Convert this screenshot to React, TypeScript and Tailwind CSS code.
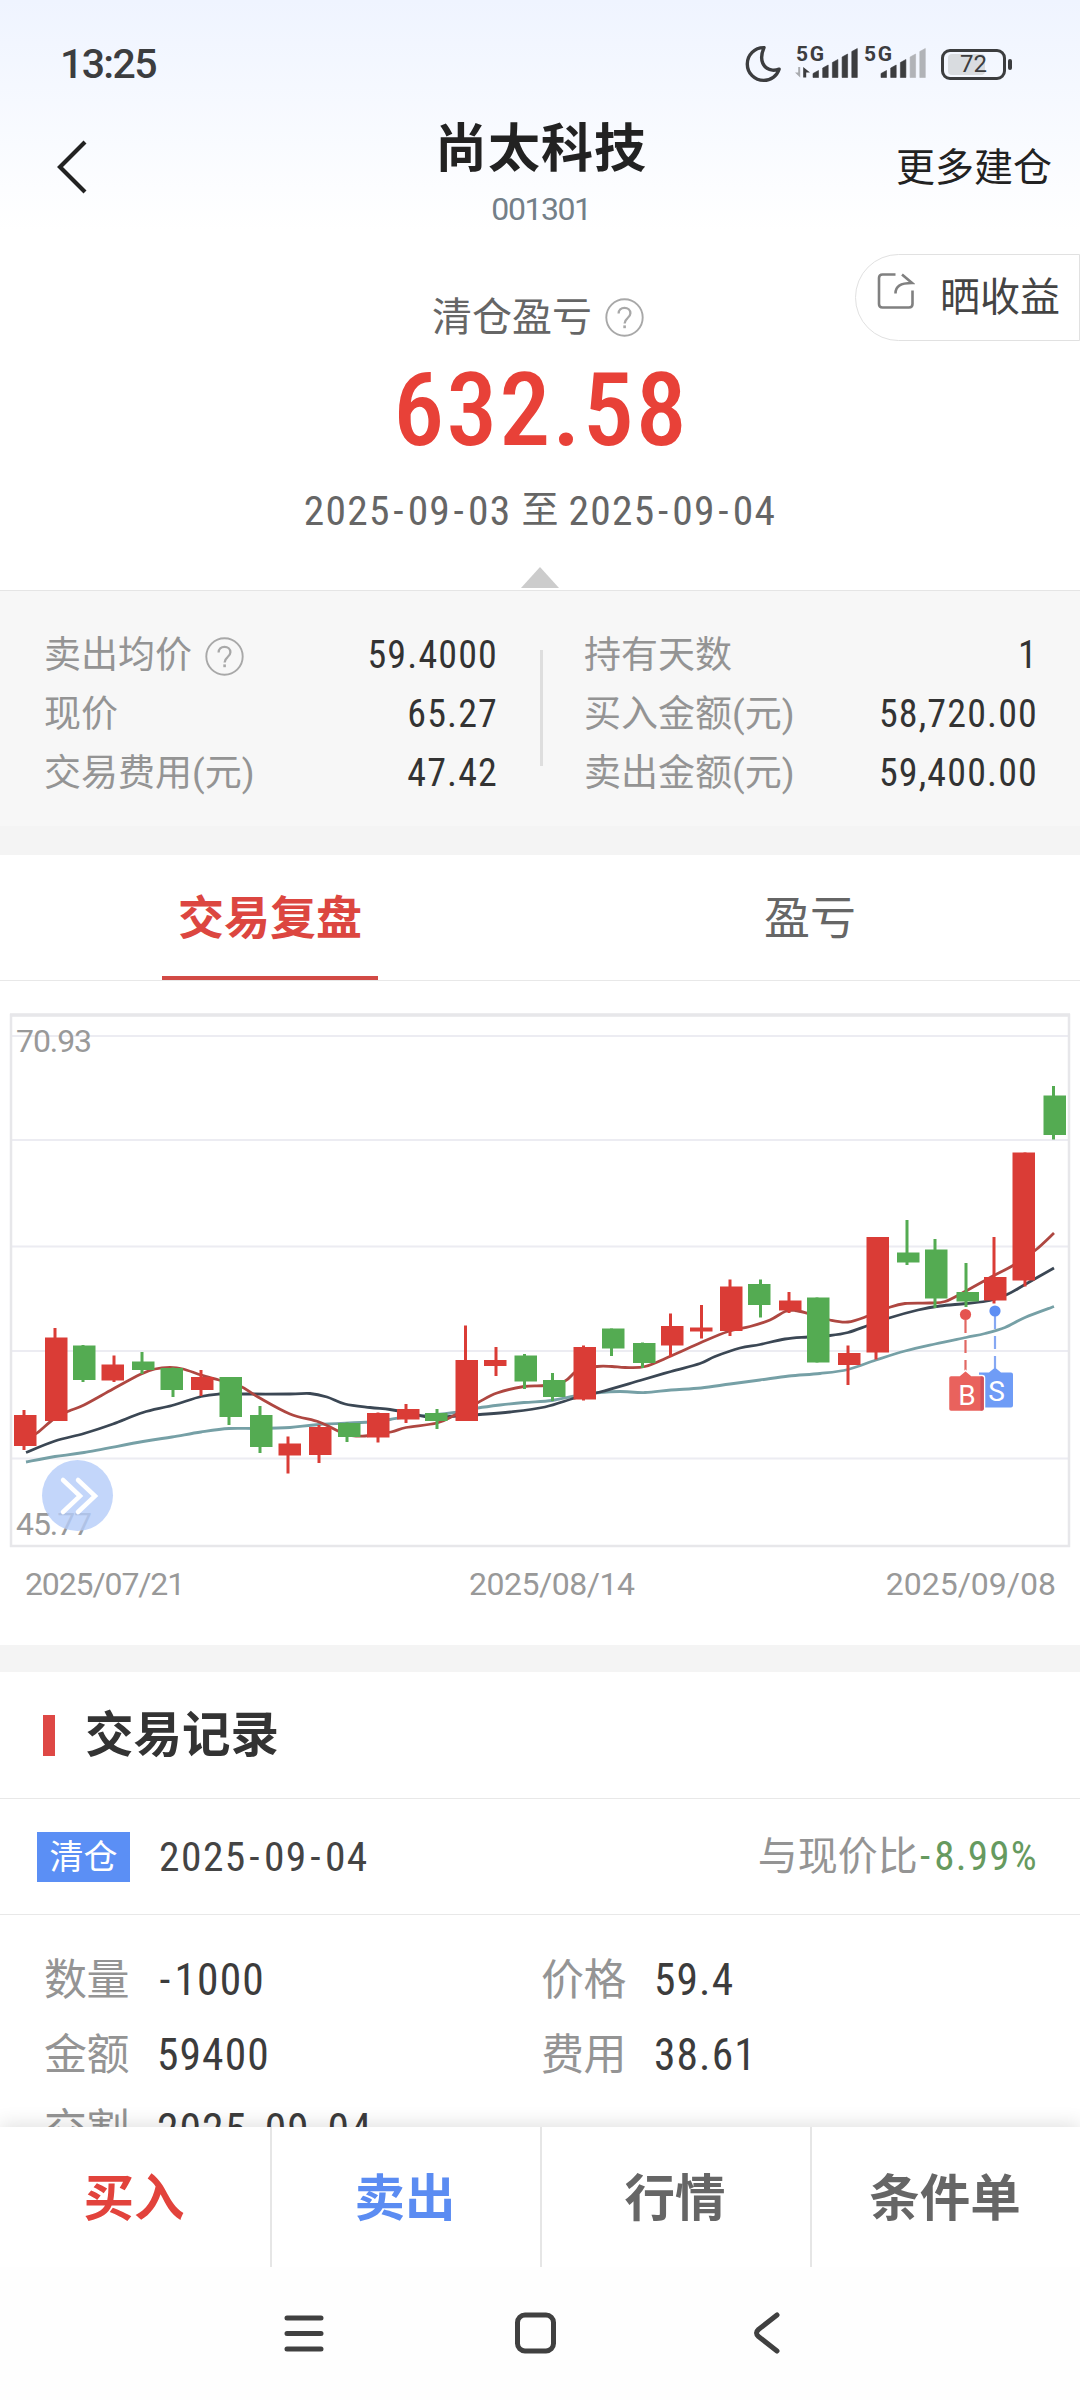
import { ReactNode } from 'react';
import clsx from 'clsx';

type Candle = {
  x: number;
  wick: number;
  high: number;
  top: number;
  bottom: number;
  low: number;
  up: boolean;
};

const c = (
  x: number,
  wick: number,
  high: number,
  top: number,
  bottom: number,
  low: number,
  up: boolean
): Candle => ({ x, wick, high, top, bottom, low, up });

const candles: Candle[] = [
  c(14, 24, 410, 415, 446, 450, true),
  c(45, 55, 328, 337.5, 421, 421, true),
  c(73, 83, 345, 345.5, 380, 382, false),
  c(101.5, 114, 355.5, 364.5, 380.5, 382, true),
  c(132, 142, 352, 361.5, 370, 374, false),
  c(160.5, 173, 367.5, 368, 390, 397, false),
  c(191, 201, 370, 377, 390, 396, true),
  c(219.5, 229, 377, 377, 417, 425, false),
  c(250, 260, 406, 415, 447, 453, false),
  c(278.5, 288, 436.5, 443.5, 455.5, 473.5, true),
  c(309, 319, 425, 427, 455, 463, true),
  c(338, 347, 422.5, 423, 437, 442, false),
  c(367, 378, 412.5, 413, 437.5, 442.5, true),
  c(397, 406, 404, 409, 419.5, 423, true),
  c(425, 437, 409, 413, 421, 429, false),
  c(455.5, 465.5, 325.5, 360, 421, 421, true),
  c(484, 496, 347, 360, 366, 376, true),
  c(514.5, 524.5, 354, 355.5, 381.5, 389, false),
  c(543, 552.5, 373, 380, 397, 401, false),
  c(573.5, 583.5, 345.5, 347, 399.5, 400.5, true),
  c(602, 611.5, 328.5, 328.5, 348.5, 356, false),
  c(633, 642.5, 342.5, 343, 363, 368, false),
  c(661, 670.5, 313.5, 326, 345.5, 357, true),
  c(690, 701.5, 305, 327.5, 331.5, 338.5, true),
  c(720, 730, 279.5, 286.5, 331, 336, true),
  c(748, 760.5, 279.5, 284, 305, 317.5, false),
  c(779, 789, 292, 300.5, 310.5, 313, true),
  c(807, 817, 297.5, 297.5, 362.5, 362.5, false),
  c(838, 848, 345.5, 353, 365, 385, true),
  c(866.5, 876, 237, 237, 352.5, 359.5, true),
  c(897, 907, 220, 252.5, 262.5, 265, false),
  c(925, 935, 239, 249.5, 298.5, 308, false),
  c(956.5, 966, 263, 292, 301.5, 307, false),
  c(984, 994, 237, 277, 300.5, 303.5, true),
  c(1012.5, 1025, 152.5, 152.5, 280.5, 286.5, true),
  c(1043.5, 1053.5, 86, 95.5, 135, 139.5, false),
];

type Point = [number, number];

const ma5: Point[] = [
  [26, 440], [37, 433], [55, 418], [69, 411], [84, 405], [113, 389], [140, 374.5], [155, 369], [170, 367.5],
  [183, 369], [201, 375], [219, 380], [240, 386], [258, 397], [290, 414], [319, 422], [338, 431], [352, 435.5],
  [365, 436], [391, 432], [406, 427.5], [437, 423], [455, 415], [478, 402.5], [497, 393], [524, 386.5],
  [545, 385.5], [565, 381], [577, 371], [597, 366.5], [612, 366.5], [625, 367.5], [645, 366.5], [671, 356],
  [701, 342.5], [728, 331.5], [750, 326.5], [770, 320], [785, 311.5], [795, 310.5], [808, 313.5], [830, 320],
  [848, 322], [868, 316], [889, 307.5], [905, 303.5], [930, 303], [945, 301.5], [966, 291], [994, 275.5],
  [1013, 265.5], [1035, 250.5], [1054, 233],
];

const ma10: Point[] = [
  [26, 452.5], [55, 441], [84, 433.5], [113, 424], [143, 412.5], [172, 405.5], [201, 396.5], [219, 394],
  [242, 394], [290, 394], [310, 393.5], [327, 397], [345, 404], [370, 407.5], [390, 409.5], [410, 413],
  [430, 417.5], [450, 416.5], [480, 414.5], [510, 412], [545, 407], [575, 398], [600, 392], [640, 380.5],
  [671, 371.5], [700, 363.5], [715, 356.5], [740, 348], [760, 344.5], [785, 339], [808, 337], [830, 335.5],
  [848, 332.5], [868, 325.5], [889, 318], [918, 310], [940, 306], [966, 303.5], [990, 300.5], [1007, 294.5],
  [1025, 284.5], [1054, 268],
];

const ma20: Point[] = [
  [26, 462], [55, 456.5], [84, 452.5], [143, 441.5], [172, 437], [201, 432], [229, 428.5], [258, 428.5],
  [290, 427.5], [319, 424.5], [370, 422], [390, 419.5], [406, 417], [437, 414.5], [465, 411], [478, 408],
  [500, 405], [524, 402.5], [552, 400.5], [575, 396], [600, 392.5], [620, 391.5], [645, 392.5], [671, 390],
  [701, 388], [730, 384], [760, 380], [789, 376], [820, 373.5], [848, 369.5], [876, 360], [905, 351],
  [935, 344], [966, 337.5], [985, 333.5], [1005, 327.5], [1025, 317.5], [1054, 306.5],
];

// Catmull-Rom to bezier
const smooth = (pts: Point[]) =>
  pts.reduce((d, p, i) => {
    if (i === 0) return `M${p[0]},${p[1]}`;
    const p0 = pts[Math.max(i - 2, 0)];
    const p1 = pts[i - 1];
    const p3 = pts[Math.min(i + 1, pts.length - 1)];
    return `${d} C${p1[0] + (p[0] - p0[0]) / 6},${p1[1] + (p[1] - p0[1]) / 6} ${p[0] - (p3[0] - p1[0]) / 6},${
      p[1] - (p3[1] - p1[1]) / 6
    } ${p[0]},${p[1]}`;
  }, '');

// Condensed figures, hyphens get some room on both sides
const Num = ({ children, className }: { children: string; className?: string }) => (
  <span className={clsx('whitespace-nowrap [font-stretch:85%]', className)}>
    {children.split('-').map((part, i) => (
      <span key={i}>
        {i > 0 && <span className="ml-[0.06em] mr-[0.07em]">-</span>}
        {part}
      </span>
    ))}
  </span>
);

const HelpIcon = () => (
  <svg width="39" height="39" viewBox="0 0 39 39" fill="none" stroke="#a8a8a8">
    <circle cx="19.5" cy="19.5" r="18.2" strokeWidth="1.9" />
    <path
      d="M13.6 15.6c0-3.6 2.6-5.7 5.9-5.7s5.9 2.2 5.9 5.4c0 2.4-1.4 3.6-3 5-1.8 1.5-2.8 2.6-2.8 5.2"
      strokeWidth="2.3"
    />
    <path d="M19.6 27.4v2.8" strokeWidth="2.6" />
  </svg>
);

const SignalBars = ({ strength }: { strength: number }) => (
  <g>
    {[7, 12.5, 18, 23.5, 29].map((h, i) => (
      <path
        key={h}
        d={`M${i * 9.7} ${32 - h + 3}l5.5 -3V32h-5.5z`}
        fill={i < strength ? '#3c3d3f' : '#b1b3b7'}
        stroke={i < strength ? '#3c3d3f' : '#b1b3b7'}
        strokeWidth="0.6"
        strokeLinejoin="round"
      />
    ))}
  </g>
);

const StatusBar = () => (
  <div className="flex h-[110px] items-center justify-between pl-[60px] pr-[68px] pt-[18px] text-[#3c3d3f]">
    <span className="text-[41px] font-medium leading-[48px] tracking-[-0.04em]">13:25</span>
    <div className="flex items-center">
      <svg width="36" height="38" viewBox="0 0 36 38" fill="none" className="-ml-[2px] mr-[2px]">
        <path
          d="M19 2.6C9.5 2.4 2.3 10 2.3 18.9 2.3 28.2 9.6 35.4 18.7 35.4c7.2 0 13.2-4.5 15.4-11.2-2.3.8-4.4 1.2-6.7.9C18.6 24 13.4 15.5 19 2.6z"
          stroke="#3c3d3f"
          strokeWidth="3.4"
          strokeLinejoin="round"
        />
      </svg>
      <svg width="135" height="50" viewBox="0 -6 135 50" className="ml-3">
        <text x="1" y="15.5" fontSize="21" fontWeight="700" fill="#3c3d3f" textLength="28">
          5G
        </text>
        <path d="M0 27.5h3.2V22h2V32.5z" fill="#a9abaf" />
        <path d="M8.2 22l6.8 5.5h-3.8V32.5H8.2z" fill="#3c3d3f" />
        <g transform="translate(18 0.5)">
          <SignalBars strength={5} />
        </g>
        <text x="69" y="15.5" fontSize="21" fontWeight="700" fill="#3c3d3f" textLength="28">
          5G
        </text>
        <g transform="translate(86 0.5)">
          <SignalBars strength={3} />
        </g>
      </svg>
      <div className="ml-[11px] flex items-center gap-[2px]">
        <div className="relative flex h-[31px] w-[65px] items-center justify-center rounded-[9px] border-[3px] border-[#3c3d3f]">
          <div className="absolute left-[4px] top-[2px] h-[21px] w-[37px] rounded-[4px] bg-[#d9dce0]" />
          <span className="relative text-[24px] leading-none">72</span>
        </div>
        <div className="h-[11px] w-[4px] rounded-sm bg-[#3c3d3f]" />
      </div>
    </div>
  </div>
);

const Header = () => (
  <div className="grid h-[121px] grid-cols-3 items-start text-[#222]">
    <div className="flex h-[114px] items-center pl-[56px]">
      <svg width="32" height="54" viewBox="0 0 32 54" fill="none" stroke="#222" strokeWidth="4.2">
        <path d="M29 2L4 27l25 25" />
      </svg>
    </div>
    <div className="pl-[2px] pt-[1px] text-center">
      <h1 className="text-[52px] font-bold leading-[78px] tracking-[0.02em]">尚太科技</h1>
      <p className="text-[32px] leading-[41px] tracking-[-0.045em] text-[#747f88]">001301</p>
    </div>
    <div className="h-[114px] pr-[28px] pt-[1px] text-right text-[39px] leading-[114px]">更多建仓</div>
  </div>
);

const ShareButton = () => (
  <button className="absolute right-0 top-[23px] flex h-[87px] w-[225px] items-center rounded-l-full border border-[#e1e1e1] bg-white pl-[21px]">
    <svg
      width="38"
      height="38"
      viewBox="0 0 38 38"
      fill="none"
      stroke="#808080"
      strokeWidth="2.6"
      className="-mt-[14px]"
    >
      <path d="M18.5 2.5H5.5Q2 2.5 2 6V32q0 3.5 3.5 3.5H32q3.5 0 3.5-3.5V18.5" />
      <path d="M18.5 21.5c0-7 4.5-10.5 16.5-10.5L25 2.5" />
    </svg>
    <span className="ml-[25px] pt-[1px] text-[40px] leading-none text-[#444]">晒收益</span>
  </button>
);

const Summary = () => (
  <div className="relative flex h-[359px] flex-col items-center pt-[60px] text-[#666]">
    <ShareButton />
    <div className="flex items-center gap-[13px] pr-[4px] text-[40px] leading-[50px]">
      <span className="pt-[2px]">清仓盈亏</span>
      <HelpIcon />
    </div>
    <div className="pl-[2px] text-[102px] font-medium leading-[135px] tracking-[0.02em] text-[#e84138] [font-stretch:85%]">
      632.58
    </div>
    <div className="flex gap-[10px] text-[41.5px] leading-[66px]">
      <Num className="tracking-[0.03em]">2025-09-03</Num>
      <span className="text-[37px]">至</span>
      <Num className="tracking-[0.03em]">2025-09-04</Num>
    </div>
    <svg width="38" height="21" viewBox="0 0 38 21" className="mt-[23px]">
      <path d="M19 0l19 21H0z" fill="#ccc" />
    </svg>
  </div>
);

const StatRow = ({ label, value, help }: { label: string; value: string; help?: boolean }) => (
  <div className="flex h-[59px] items-center justify-between">
    <span className="flex items-center gap-[13px] pt-[1px] text-[37px] text-[#949494]">
      {label}
      {help && <HelpIcon />}
    </span>
    <Num className="text-[38px] tracking-[0.03em] text-[#333]">{value}</Num>
  </div>
);

const Stats = () => (
  <div className="flex h-[236px] border-t border-[#e5e5e5] bg-[#f7f7f7] pt-[35px]">
    <div className="w-[540px] pl-[44px] pr-[42px]">
      <StatRow label="卖出均价" value="59.4000" help />
      <StatRow label="现价" value="65.27" />
      <StatRow label="交易费用(元)" value="47.42" />
    </div>
    <div className="mt-[24px] h-[116px] w-[3px] bg-[#dedede]" />
    <div className="flex-1 pl-[41px] pr-[42px]">
      <StatRow label="持有天数" value="1" />
      <StatRow label="买入金额(元)" value="58,720.00" />
      <StatRow label="卖出金额(元)" value="59,400.00" />
    </div>
  </div>
);

const Tab = ({ children, active }: { children: ReactNode; active?: boolean }) => (
  <div className="flex flex-1 flex-col items-center">
    <span
      className={clsx(
        'h-[121px] text-[46px] leading-[126px]',
        active ? 'font-bold text-[#dc4640]' : 'text-[#666]'
      )}
    >
      {children}
    </span>
    {active && <div className="h-1 w-[216px] bg-[#d24a45]" />}
  </div>
);

const KLineChart = () => (
  <div className="relative mt-[19px] h-[560px]">
    <svg width="1080" height="560" viewBox="0 0 1080 560" fill="none">
      {[36, 140, 246.5, 351, 458.5].map(y => (
        <path key={y} d={`M12 ${y}H1068`} stroke="#ececf2" strokeWidth="2" />
      ))}
      <rect x="11" y="15" width="1058" height="531" stroke="#e7e7ea" strokeWidth="2.5" />
      <path d="M10 15H1070" stroke="#e7e7ea" strokeWidth="3.5" />
      <path d={smooth(ma20)} stroke="#76a0a6" strokeWidth="2.8" />
      <path d={smooth(ma10)} stroke="#3b4754" strokeWidth="2.8" />
      <path d={smooth(ma5)} stroke="#ae4741" strokeWidth="2.8" />
      {candles.map(k => (
        <g key={k.x} fill={k.up ? '#da3c36' : '#54ab52'}>
          <rect x={k.wick - 1.5} y={k.high} width="3" height={k.low - k.high} />
          <rect x={k.x} y={k.top} width="22.5" height={k.bottom - k.top} />
        </g>
      ))}
      <path d="M965.5 320V372" stroke="#e26863" strokeWidth="2.2" strokeDasharray="13 7" />
      <circle cx="965.5" cy="314.5" r="5.6" fill="#e5534f" />
      <path d="M995 316V368" stroke="#86a8f3" strokeWidth="2.2" strokeDasharray="13 7" />
      <circle cx="995" cy="311" r="5.6" fill="#5d8ef3" />
      <path d="M979 372.5h10l6-5 6 5h10q2 0 2 2v31q0 2-2 2h-32z" fill="#6f9cf6" />
      <text x="996.5" y="401" fontSize="28" fill="#fff" textAnchor="middle">
        S
      </text>
      <path
        d="M951 375.5h8.5l6-5 6 5h10.5q2.5 0 2.5 2.5v31q0 2.5-2.5 2.5h-31q-2.5 0-2.5-2.5v-31q0-2.5 2.5-2.5z"
        fill="#e9625d"
        stroke="#fff"
        strokeWidth="1.5"
      />
      <path d="M980.5 376.5h1.5q1.8 0 1.8 2v30q0 2-1.8 2h-1.5z" fill="#d0505a" />
      <text x="967" y="405" fontSize="28" fill="#fff" textAnchor="middle">
        B
      </text>
      <g fontSize="32" fill="#999">
        <text x="16" y="52" textLength="76">
          70.93
        </text>
        <text x="16" y="535" textLength="76">
          45.77
        </text>
      </g>
    </svg>
    <button className="absolute left-[42px] top-[460px] flex size-[71px] items-center justify-center rounded-full bg-[#b4ccf9]/80">
      <svg
        width="42"
        height="40"
        viewBox="0 0 42 40"
        fill="none"
        stroke="#fff"
        strokeWidth="4.5"
        strokeLinecap="round"
        className="ml-px"
      >
        <path d="M6 4l17 16L6 36M21 4l17 16-17 16" />
      </svg>
    </button>
  </div>
);

const Field = ({ label, value }: { label: string; value: string }) => (
  <div className="flex h-[75px] items-center">
    <span className="w-[113px] text-[43px] tracking-[-0.01em] text-[#949494]">{label}</span>
    <Num className="text-[43.5px] tracking-[0.025em] text-[#3c3c3c]">{value}</Num>
  </div>
);

const Records = () => (
  <div>
    <div className="flex h-[127px] items-center border-b border-[#e8e8e8] pl-[43px]">
      <div className="h-[41px] w-[12px] bg-[#de4845]" />
      <h2 className="ml-[30px] pt-[2px] text-[48.5px] font-bold text-[#333]">交易记录</h2>
    </div>
    <div className="flex h-[116px] items-center border-b border-[#e8e8e8] pl-[37px] pr-[42px] pt-[1px]">
      <span className="h-[50px] w-[93px] bg-[#5b8ff5] text-center text-[34px] leading-[51px] text-white">清仓</span>
      <Num className="ml-[29px] pt-[1px] text-[41.5px] tracking-[0.035em] text-[#444]">2025-09-04</Num>
      <span className="ml-auto text-[40px] text-[#949494]">
        与现价比<Num className="text-[41px] tracking-[0.03em] text-[#669a5f]">-8.99%</Num>
      </span>
    </div>
    <div className="grid auto-rows-[75px] grid-cols-2 pl-[44px] pr-[84px] pt-[28px]">
      <Field label="数量" value="-1000" />
      <div className="pl-[21px]">
        <Field label="价格" value="59.4" />
      </div>
      <Field label="金额" value="59400" />
      <div className="pl-[21px]">
        <Field label="费用" value="38.61" />
      </div>
      <Field label="交割" value="2025-09-04" />
    </div>
  </div>
);

const actions = [
  { label: '买入', color: 'text-[#e2433c]' },
  { label: '卖出', color: 'text-[#5b8cf2]' },
  { label: '行情', color: 'text-[#666]' },
  { label: '条件单', color: 'text-[#666]' },
];

const ActionBar = () => (
  <div className="relative grid h-[140px] shrink-0 grid-cols-4 bg-white shadow-[0_-3px_18px_rgba(0,0,0,0.12)]">
    {actions.map((a, i) => (
      <button
        key={a.label}
        className={clsx('pr-[2px] text-[50.5px] font-bold leading-[143px]', a.color, i > 0 && 'border-l-2 border-[#e6e6e6]')}
      >
        {a.label}
      </button>
    ))}
  </div>
);

const SystemNav = () => (
  <div className="relative h-[133px] shrink-0 bg-[#fefefe] pl-[283px] pt-[45px]">
    <svg width="500" height="42" viewBox="0 0 500 42" fill="none" stroke="#404040" strokeWidth="5" strokeLinecap="round">
      <path d="M4 6H38M4 21.5H38M4 37H38" />
      <rect x="234.5" y="3" width="36" height="36" rx="7.5" />
      <path d="M494 3L475.5 17.5q-4 3.5 0 7L494 39" strokeLinejoin="round" />
    </svg>
  </div>
);

const App = () => (
  <div className="flex h-[2400px] w-[1080px] flex-col overflow-hidden bg-white font-['Roboto','Noto_Sans_CJK_SC',sans-serif]">
    <div className="h-[2127px] shrink-0 overflow-hidden">
      <div className="bg-gradient-to-b from-[#eff4ff] to-white">
        <StatusBar />
        <Header />
      </div>
      <Summary />
      <Stats />
      <div className="h-[29px] bg-[#f4f4f4]" />
      <div className="flex h-[126px] border-b border-[#e8e8e8]">
        <Tab active>交易复盘</Tab>
        <Tab>盈亏</Tab>
      </div>
      <KLineChart />
      <div className="flex h-[85px] pl-[25px] pr-[24px] text-[32px] leading-[48px] text-[#999]">
        <span className="w-[444px] tracking-[-0.035em]">2025/07/21</span>
        <span className="tracking-[-0.015em]">2025/08/14</span>
        <span className="ml-auto">2025/09/08</span>
      </div>
      <div className="h-[27px] bg-[#f4f4f4]" />
      <Records />
    </div>
    <ActionBar />
    <SystemNav />
  </div>
);

export default App;
